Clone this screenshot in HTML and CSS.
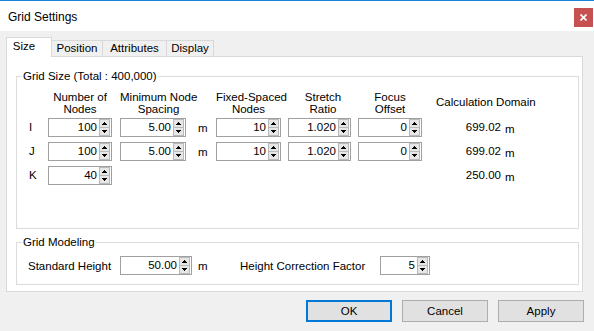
FILE: index.html
```html
<!DOCTYPE html>
<html>
<head>
<meta charset="utf-8">
<title>Grid Settings</title>
<link rel="stylesheet" href="styles.css">
</head>
<body>
<svg class="defs" aria-hidden="true">
  <symbol id="spin" viewBox="0 0 11 17">
    <rect x="0" y="0" width="11" height="17" fill="#e6e6e6"/>
    <rect x="0.5" y="0.5" width="10" height="16" fill="none" stroke="#b9b9b9"/>
    <line x1="0" y1="8.5" x2="11" y2="8.5" stroke="#b9b9b9"/>
    <rect x="5" y="3" width="1" height="1" fill="#000"/>
    <rect x="4" y="4" width="3" height="1" fill="#000"/>
    <rect x="3" y="5" width="5" height="1" fill="#000"/>
    <rect x="3" y="11" width="5" height="1" fill="#000"/>
    <rect x="4" y="12" width="3" height="1" fill="#000"/>
    <rect x="5" y="13" width="1" height="1" fill="#000"/>
  </symbol>
</svg>
<div class="window">
  <div class="titlebar">
    <span class="title">Grid Settings</span>
    <div class="close"><svg width="7" height="7" viewBox="0 0 7 7"><path d="M0.5 0.5L6.5 6.5M6.5 0.5L0.5 6.5" stroke="#fff" stroke-width="1.7"/></svg></div>
  </div>
  <div class="content">
    <div class="tabs">
      <div class="tab active t-size">Size</div>
      <div class="tab t-pos">Position</div>
      <div class="tab t-attr">Attributes</div>
      <div class="tab t-disp">Display</div>
    </div>
    <div class="panel">
      <fieldset class="group gridsize">
        <legend>Grid Size (Total : 400,000)</legend>
        <div class="sizegrid">
          <div class="hd c-n">Number of<br>Nodes</div>
          <div class="hd hd-s c-s">Minimum Node<br>Spacing</div>
          <div class="hd c-f">Fixed-Spaced<br>Nodes</div>
          <div class="hd hd-r c-r">Stretch<br>Ratio</div>
          <div class="hd c-o">Focus<br>Offset</div>
          <div class="hd hd-d c-d">Calculation Domain</div>

          <div class="lbl c-l">I</div>
          <div class="sb c-n"><span class="v">100</span><svg class="sp"><use href="#spin"/></svg></div>
          <div class="sb c-s"><span class="v">5.00</span><svg class="sp"><use href="#spin"/></svg></div>
          <div class="unit c-u">m</div>
          <div class="sb c-f"><span class="v">10</span><svg class="sp"><use href="#spin"/></svg></div>
          <div class="sb c-r"><span class="v">1.020</span><svg class="sp"><use href="#spin"/></svg></div>
          <div class="sb c-o"><span class="v">0</span><svg class="sp"><use href="#spin"/></svg></div>
          <div class="dom c-d"><span class="n">699.02</span><span class="m">m</span></div>

          <div class="lbl c-l">J</div>
          <div class="sb c-n"><span class="v">100</span><svg class="sp"><use href="#spin"/></svg></div>
          <div class="sb c-s"><span class="v">5.00</span><svg class="sp"><use href="#spin"/></svg></div>
          <div class="unit c-u">m</div>
          <div class="sb c-f"><span class="v">10</span><svg class="sp"><use href="#spin"/></svg></div>
          <div class="sb c-r"><span class="v">1.020</span><svg class="sp"><use href="#spin"/></svg></div>
          <div class="sb c-o"><span class="v">0</span><svg class="sp"><use href="#spin"/></svg></div>
          <div class="dom c-d"><span class="n">699.02</span><span class="m">m</span></div>

          <div class="lbl c-l">K</div>
          <div class="sb c-n"><span class="v">40</span><svg class="sp"><use href="#spin"/></svg></div>
          <div class="dom c-d"><span class="n">250.00</span><span class="m">m</span></div>
        </div>
      </fieldset>
      <fieldset class="group modeling">
        <legend>Grid Modeling</legend>
        <div class="modrow">
          <span class="mlbl">Standard Height</span>
          <div class="sb w72"><span class="v">50.00</span><svg class="sp"><use href="#spin"/></svg></div>
          <span class="munit">m</span>
          <span class="mlbl2">Height Correction Factor</span>
          <div class="sb w50"><span class="v">5</span><svg class="sp"><use href="#spin"/></svg></div>
        </div>
      </fieldset>
    </div>
    <div class="buttons">
      <button class="btn default">OK</button>
      <button class="btn">Cancel</button>
      <button class="btn">Apply</button>
    </div>
  </div>
</div>
</body>
</html>
```
FILE: styles.css
```css
* { box-sizing: border-box; }
html, body { margin: 0; padding: 0; }
body {
  width: 594px;
  height: 331px;
  overflow: hidden;
  background: #f0f0f0;
  font-family: "Liberation Sans", Arial, sans-serif;
  font-size: 11.5px;
  color: #000;
}
.defs { display: none; }

.titlebar {
  height: 31px;
  border-top: 1px solid #1883d7;
  background: #fff;
  display: flex;
  align-items: flex-start;
  justify-content: space-between;
}
.title {
  font-size: 12px;
  line-height: 16px;
  margin: 8px 0 0 8px;
}
.close {
  width: 19px;
  height: 19px;
  margin: 7px 1px 0 0;
  background: #c75050;
  display: flex;
  align-items: center;
  justify-content: center;
}
.close svg { display: block; }

.content { padding: 6px 0 0 6px; }

.tabs {
  display: flex;
  align-items: flex-end;
  height: 19px;
}
.tab {
  height: 16px;
  border: 1px solid #d9d9d9;
  border-bottom: 0;
  background: #f0f0f0;
  text-align: center;
  line-height: 15px;
  margin-left: -1px;
  white-space: nowrap;
}
.tab.active {
  height: 20px;
  margin-left: 0;
  margin-bottom: -1px;
  background: #fff;
  z-index: 1;
  line-height: 17px;
}
.t-size { width: 46px; padding-right: 10px; }
.t-pos { width: 52px; }
.t-attr { width: 65px; }
.t-disp { width: 48px; }

.panel {
  margin-right: 11px;
  background: #fff;
  border: 1px solid #d9d9d9;
  padding: 13px 3px 6px 9px;
}

fieldset.group {
  margin: 0;
  border: 1px solid #dcdcdc;
  min-width: 0;
}
fieldset.group legend {
  padding: 0 1px;
  margin-left: 5px;
  line-height: 13px;
}
fieldset.gridsize { padding: 8px 0 43px 0; }
fieldset.modeling { margin-top: 7px; padding: 7px 0 9px 0; }

.sizegrid {
  display: grid;
  grid-template-columns: 31px 64px 8px 66px 30px 65px 7px 63px 7px 64px 1fr;
  grid-template-rows: 22px 19px 19px 19px;
  row-gap: 5px;
}
.c-l { grid-column: 1; }
.c-n { grid-column: 2; }
.c-s { grid-column: 4; }
.c-u { grid-column: 5; }
.c-f { grid-column: 6; }
.c-r { grid-column: 8; }
.c-o { grid-column: 10; }
.c-d { grid-column: 11; }

.hd {
  line-height: 12px;
  text-align: center;
  align-self: start;
  white-space: nowrap;
}
.hd-s { margin-right: -11px; }
.hd-r { margin-left: 7px; }
.hd-d { align-self: center; text-align: left; padding-left: 14px; }

.lbl { padding-left: 12px; line-height: 19px; }
.unit { padding-left: 12px; line-height: 20px; }

.dom { line-height: 19px; white-space: nowrap; }
.dom .n { display: inline-block; width: 79px; text-align: right; }
.dom .m { margin-left: 4px; vertical-align: -2px; }

.sb {
  display: flex;
  height: 19px;
  border: 1px solid #a0a0a0;
  background: #fff;
}
.sb .v {
  flex: 1;
  text-align: right;
  line-height: 17px;
  padding-right: 2px;
}
.sb .sp {
  width: 11px;
  height: 17px;
  flex: none;
  margin-right: 1px;
  display: block;
}

.modrow {
  display: flex;
  align-items: center;
  height: 19px;
  padding-left: 11px;
}
.mlbl { width: 92px; }
.w72 { width: 72px; }
.w50 { width: 50px; }
.munit { width: 48px; padding-left: 6px; }
.mlbl2 { width: 140px; }

.buttons {
  display: flex;
  justify-content: flex-end;
  gap: 10px;
  padding-right: 10px;
  margin-top: 8px;
}
.btn {
  width: 86px;
  height: 22px;
  background: #e1e1e1;
  border: 1px solid #adadad;
  font: inherit;
  color: #000;
  padding: 0;
  margin: 0;
}
.btn.default { border: 2px solid #0078d7; }
```
